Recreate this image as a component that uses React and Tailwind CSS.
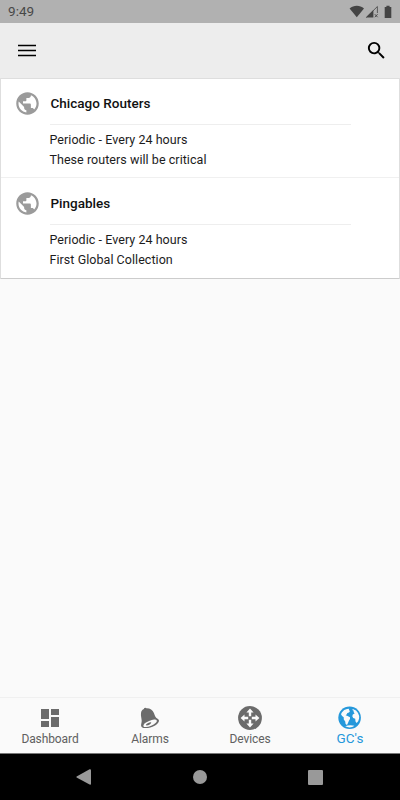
import React from 'react';
import { MdDashboard, MdPublic, MdSearch } from 'react-icons/md';

const collections = [
  { name: 'Chicago Routers', schedule: 'Periodic - Every 24 hours', description: 'These routers will be critical' },
  { name: 'Pingables', schedule: 'Periodic - Every 24 hours', description: 'First Global Collection' },
];

const BellIcon = () => (
  <svg viewBox="0 0 24 24" className="w-6 h-6">
    <path
      fill="#6b6b6b"
      d="M5.9 2.4C6.6 1.4 8 1.5 8.4 2.3C12 2.2 14.6 4 15.9 7C17.1 9.8 17.2 11.4 19.6 12.7C22.6 14.2 20.4 17.6 16.6 19.7C12.2 22.3 5.8 22.9 3.6 20.9C2.3 19.4 3.8 17.3 3.7 14.8C3.6 12.4 2.6 10.2 3 7.1C3.3 4.9 4.3 3.6 6 3Z"
    />
    <ellipse cx="12.1" cy="17.3" rx="7.3" ry="2.6" transform="rotate(-23 12.1 17.3)" fill="#fafafa" />
    <path fill="#6b6b6b" d="M7.9 18.7C9.2 17 11.6 15.9 13.3 16.2C13.1 17.9 10.9 19.3 8.4 19.5Z" />
  </svg>
);

const DevicesIcon = () => (
  <svg viewBox="0 0 24 24" className="w-6 h-6">
    <circle cx="12" cy="12" r="11.9" fill="#6b6b6b" />
    {['rotate(0 12 12)', 'rotate(90 12 12)', 'rotate(180 12 12)', 'rotate(270 12 12)'].map((rotation) => (
      <path
        key={rotation}
        transform={rotation}
        fill="#fafafa"
        d="M12 2.6L15.6 6.5H13.2V10.2H10.8V6.5H8.4Z"
      />
    ))}
  </svg>
);

const EarthIcon = () => (
  <svg viewBox="0 0 24 24" className="w-6 h-6">
    <circle cx="11.6" cy="11.7" r="11.3" fill="#2598db" />
    <path
      fill="#fafafa"
      d="M3.8 6.4L6.2 4L9 2.9L11.2 2.7L10.8 4L12 5L11 6.4L9.4 7L8.6 8.6L7.6 9.2L9.6 9.9L12 11.3L12 13L11 14.6L10.2 16.5L9 18.9L7.6 18L7.2 15.5L5.8 13.5L5.7 11.3L4.1 10L3 8.2Z"
    />
    <path
      fill="#fafafa"
      d="M14.8 2.9L18 4.5L20 7L21.2 9.9L21.1 12.6L20.2 15.2L18.6 17L17.5 15.6L17.2 12.8L15.2 12L14.3 10.3L14.8 8.6L16.6 7.4L15.6 6L15.7 4.8L14.4 4Z"
    />
    <path fill="#fafafa" d="M7.2 20.3C9.8 19.1 13.6 19 16.4 19.8C13.7 21.8 10.2 21.9 7.2 20.3Z" />
  </svg>
);

const tabs = [
  { label: 'Dashboard', icon: <MdDashboard className="w-6 h-6 text-[#6b6b6b]" /> },
  { label: 'Alarms', icon: <BellIcon /> },
  { label: 'Devices', icon: <DevicesIcon /> },
  { label: "GC's", icon: <EarthIcon />, active: true },
];

const StatusBar = () => (
  <div className="h-[23px] shrink-0 bg-[#b1b1b1] flex items-center justify-between pl-2 pr-[7px]">
    <span className="text-[13.5px] leading-none text-[#484848] tracking-[0.05px] pt-px">9:49</span>
    <svg width="44" height="14" viewBox="0 0 44 14" fill="#444">
      <path d="M0.6 3.4C4.7 0 10.9 0 15 3.4L7.8 12.2Z" />
      <path d="M16.8 12.6L24.4 5.1V12.6Z" />
      <path d="M17.4 12.4L28.4 1.5V8" fill="none" stroke="#444" strokeWidth="0.8" />
      <path d="M25.8 9.2L28.6 12.2M28.6 9.2L25.8 12.2" stroke="#444" strokeWidth="0.9" />
      <path d="M37.4 0.8H40.6V2H42.3V13H35.7V2H37.4Z" />
    </svg>
  </div>
);

const Header = () => (
  <header className="h-[55px] shrink-0 bg-[#ededed] flex items-center justify-between pl-[18px] pr-3">
    <svg width="18" height="13" viewBox="0 0 18 13" stroke="#000" strokeWidth="1.6">
      <path d="M0 1.5H18M0 6.5H18M0 11.5H18" />
    </svg>
    <MdSearch className="w-[23px] h-[23px] text-black" />
  </header>
);

const CollectionItem = ({ item }) => (
  <li className="h-[99px] last:h-[100px] last:pt-px pl-[13px] flex border-b border-[#f0f0f0] last:border-b-0">
    <MdPublic className="w-[27px] h-[27px] mt-[11px] shrink-0 text-[#9b9b9b]" />
    <div className="ml-[8.5px] w-[301px]">
      <h2 className="h-[46px] pl-px pt-[14px] text-[13.5px] leading-5 font-medium text-[#111] border-b border-[#eee]">
        {item.name}
      </h2>
      <p className="pt-[5px] text-[12.5px] leading-[19.5px] tracking-[0.05px] text-[#1c1c1c]">
        {item.schedule}
        <br />
        {item.description}
      </p>
    </div>
  </li>
);

const TabBar = () => (
  <nav className="h-14 shrink-0 bg-[#fafafa] border-t border-[#f0f0f0] grid grid-cols-4">
    {tabs.map((tab) => (
      <div key={tab.label} className="flex flex-col items-center pt-2">
        {tab.icon}
        <span
          className={
            tab.active
              ? 'text-[13.5px] leading-[17px] text-[#2598db]'
              : 'text-[12px] leading-[18px] tracking-[-0.1px] text-[#606060]'
          }
        >
          {tab.label}
        </span>
      </div>
    ))}
  </nav>
);

const SystemNav = () => (
  <div className="h-[47px] shrink-0 bg-black border-t border-[#777] flex items-center justify-between pl-[76px] pr-[77px]">
    <svg width="15" height="16" viewBox="0 0 15 16" fill="#999">
      <path d="M13.6 0.2Q15 0 15 1.2V14.8Q15 16 13.6 15.6L0.6 8.6Q0 8 0.6 7.4Z" />
    </svg>
    <div className="w-3.5 h-3.5 rounded-full bg-[#999]" />
    <div className="w-[15px] h-[15px] rounded-[1px] bg-[#999]" />
  </div>
);

const App = () => {
  return (
    <div className="w-[400px] h-[800px] flex flex-col overflow-hidden bg-[#fafafa] font-[Roboto,sans-serif]">
      <StatusBar />
      <Header />
      <main className="flex-1">
        <ul className="bg-white border border-[#dedede] border-b-[#ccc] rounded-[1px]">
          {collections.map((item) => (
            <CollectionItem key={item.name} item={item} />
          ))}
        </ul>
      </main>
      <TabBar />
      <SystemNav />
    </div>
  );
};

export default App;
